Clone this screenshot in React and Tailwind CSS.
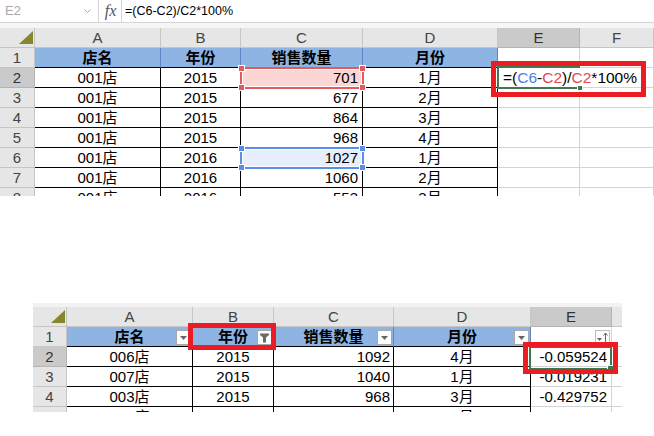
import React from 'react'

const F = "font-['Liberation_Sans','Noto_Sans_CJK_SC',sans-serif]"

const hdr = 'shrink-0 h-[20px] flex items-center justify-center bg-[#e6e6e6] border-r border-b border-[#c6c6c6] text-[#444]'
const hdrSel = 'shrink-0 h-[20px] flex items-center justify-center bg-[#cacaca] border-r border-b border-[#b4b4b4] text-[#333]'
const data = 'shrink-0 h-[20px] flex items-center border-r border-b border-black whitespace-nowrap overflow-hidden'
const thead = 'relative shrink-0 h-[20px] flex items-center justify-center bg-[#8db4e2] border-r border-b border-[#5b87c6] border-b-black font-bold whitespace-nowrap'
const grid = 'shrink-0 h-[20px] flex items-center border-r border-b border-[#d4d4d4] whitespace-nowrap'

const topRows = [
  ['001店', '2015', '701', '1月'],
  ['001店', '2015', '677', '2月'],
  ['001店', '2015', '864', '3月'],
  ['001店', '2015', '968', '4月'],
  ['001店', '2016', '1027', '1月'],
  ['001店', '2016', '1060', '2月'],
  ['001店', '2016', '553', '3月'],
]

const bottomRows = [
  ['006店', '2015', '1092', '4月', '-0.059524'],
  ['007店', '2015', '1040', '1月', '-0.019231'],
  ['003店', '2015', '968', '3月', '-0.429752'],
  ['005店', '2016', '1210', '2月', '0.112403'],
]

const Corner = ({ w }) => (
  <div className={`${hdr} ${w} relative`}>
    <svg className="absolute right-[1px] bottom-[3px]" width="14" height="13" viewBox="0 0 14 13">
      <polygon points="14,0 14,13 0,13" fill="#86862f" />
    </svg>
  </div>
)

const DropBtn = () => (
  <span className="absolute right-[1px] top-[3px] w-[15px] h-[15px] bg-[#fdfdfd] border border-[#a8a8a8] flex items-center justify-center">
    <svg width="9" height="9" viewBox="0 0 9 9">
      <polygon points="1,3 8,3 4.5,7" fill="#666" />
    </svg>
  </span>
)

const FilterBtn = () => (
  <span className="absolute right-[1px] top-[3px] w-[15px] h-[15px] bg-[#fdfdfd] border border-[#a8a8a8] flex items-center justify-center">
    <svg width="11" height="11" viewBox="0 0 11 11">
      <path d="M1 1.5h9v1.5l-3 2.5v5h-3v-5l-3-2.5z" fill="#6a6a6a" />
    </svg>
  </span>
)

const SortBtn = () => (
  <span className="absolute right-[1px] top-[3px] w-[15px] h-[15px] bg-[#fdfdfd] border border-[#bdbdbd] flex items-center justify-center">
    <svg width="13" height="13" viewBox="0 0 13 13">
      <polygon points="1,7 6,7 3.5,10" fill="#666" />
      <path d="M9.5 12V2M7.5 4.5l2-2.5 2 2.5" stroke="#666" strokeWidth="1" fill="none" />
    </svg>
  </span>
)

const Outline = ({ pos, color, fill }) => (
  <div className={`absolute ${pos} border-2 ${color} ${fill} shadow-[inset_0_0_0_1px_white]`}>
    <span className={`absolute -left-[4px] -top-[4px] w-[7px] h-[7px] border border-white ${fill === 'bg-transparent' ? '' : ''} ${color.replace('border-', 'bg-')}`} />
  </div>
)

const Handles = ({ bg }) => (
  <>
    <span className={`absolute -left-[4px] -top-[4px] w-[7px] h-[7px] border border-white ${bg}`} />
    <span className={`absolute -right-[4px] -top-[4px] w-[7px] h-[7px] border border-white ${bg}`} />
    <span className={`absolute -left-[4px] -bottom-[4px] w-[7px] h-[7px] border border-white ${bg}`} />
    <span className={`absolute -right-[4px] -bottom-[4px] w-[7px] h-[7px] border border-white ${bg}`} />
  </>
)

function TopSheet() {
  return (
    <div className="relative h-[196px] overflow-hidden shrink-0">
      {/* formula bar */}
      <div className="flex h-[23px] border-b border-[#d4d4d4]">
        <div className="w-[99px] flex items-center justify-between pl-[5px] pr-[7px] border-r border-[#d4d4d4]">
          <span className="text-[13px] text-[#a8a8a8]">E2</span>
          <svg width="7" height="5" viewBox="0 0 7 5">
            <path d="M0.5 0.5l3 3 3-3" stroke="#aaa" fill="none" />
          </svg>
        </div>
        <div className="w-[22px] ml-[1px] flex items-center justify-center border-r border-[#d4d4d4]">
          <span className="font-['Liberation_Serif',serif] italic text-[16px] text-[#555]">fx</span>
        </div>
        <div className="pl-[3px] flex items-center text-[12.5px]">=(C6-C2)/C2*100%</div>
      </div>
      <div className="h-[5px] bg-[#f6f6f6]" />

      {/* column headers */}
      <div className="flex">
        <Corner w="w-[35px]" />
        <div className={`${hdr} w-[126px]`}>A</div>
        <div className={`${hdr} w-[80px]`}>B</div>
        <div className={`${hdr} w-[122px]`}>C</div>
        <div className={`${hdr} w-[135px]`}>D</div>
        <div className={`${hdrSel} w-[82px]`}>E</div>
        <div className={`${hdr} w-[74px]`}>F</div>
      </div>

      {/* row 1 */}
      <div className="flex">
        <div className={`${hdr} w-[35px]`}>1</div>
        <div className={`${thead} w-[126px]`}>店名</div>
        <div className={`${thead} w-[80px]`}>年份</div>
        <div className={`${thead} w-[122px]`}>销售数量</div>
        <div className={`${thead} w-[135px]`}>月份</div>
        <div className={`${grid} w-[82px]`} />
        <div className={`${grid} w-[74px]`} />
      </div>

      {topRows.map((r, i) => (
        <div key={i} className="flex">
          <div className={`${i === 0 ? hdrSel : hdr} w-[35px]`}>{i + 2}</div>
          <div className={`${data} w-[126px] justify-center`}>{r[0]}</div>
          <div className={`${data} w-[80px] justify-center`}>{r[1]}</div>
          <div className={`${data} w-[122px] justify-end pr-[4px] ${i === 0 ? 'bg-[#fcd5d5]' : i === 4 ? 'bg-[#e6eefc]' : ''}`}>{r[2]}</div>
          <div className={`${data} w-[135px] justify-center`}>{r[3]}</div>
          {i === 0 ? (
            <div className="shrink-0 h-[20px] w-[82px] flex items-center border-b border-[#d4d4d4] pl-[5px] whitespace-nowrap text-[15.5px]">
              =(<span className="text-[#4a7fe3]">C6</span>-<span className="text-[#e5484c]">C2</span>)/<span className="text-[#e5484c]">C2</span>*100%
            </div>
          ) : (
            <div className={`${grid} w-[82px]`} />
          )}
          <div className={`${grid} w-[74px]`} />
        </div>
      ))}

      {/* overlays */}
      <div className="absolute left-[240px] top-[67px] w-[124px] h-[22px] border-2 border-[#e45b5d] shadow-[inset_0_0_0_1px_white]">
        <Handles bg="bg-[#e45b5d]" />
      </div>
      <div className="absolute left-[240px] top-[147px] w-[124px] h-[22px] border-2 border-[#5b8ee6] shadow-[inset_0_0_0_1px_white]">
        <Handles bg="bg-[#5b8ee6]" />
      </div>
      <div className="absolute left-[497px] top-[66px] w-[83px] h-[23px] border-l-2 border-t-2 border-b-2 border-[#41794f]">
        <span className="absolute -right-[3px] -bottom-[4px] w-[6px] h-[6px] bg-[#41794f] border border-white" />
      </div>
      <div className="absolute left-[491px] top-[61px] w-[155px] h-[36px] border-[5px] border-[#ec1c24]" />
    </div>
  )
}

function BottomSheet() {
  return (
    <div className="relative ml-[33px] w-[589px] h-[109px] overflow-hidden shrink-0">
      <div className="h-[4px] bg-[#f2f2f2]" />
      <div className="flex">
        <Corner w="w-[34px]" />
        <div className={`${hdr} w-[126px]`}>A</div>
        <div className={`${hdr} w-[81px]`}>B</div>
        <div className={`${hdr} w-[120px]`}>C</div>
        <div className={`${hdr} w-[137px]`}>D</div>
        <div className={`${hdrSel} w-[81px]`}>E</div>
        <div className={`${hdr} w-[10px] border-r-0`} />
      </div>

      <div className="flex">
        <div className={`${hdr} w-[34px]`}>1</div>
        <div className={`${thead} w-[126px]`}>店名<DropBtn /></div>
        <div className={`${thead} w-[81px]`}>年份<FilterBtn /></div>
        <div className={`${thead} w-[120px]`}>销售数量<DropBtn /></div>
        <div className={`${thead} w-[137px]`}>月份<DropBtn /></div>
        <div className={`${grid} w-[81px] relative`}><SortBtn /></div>
        <div className="shrink-0 h-[20px] w-[10px] border-b border-[#d4d4d4]" />
      </div>

      {bottomRows.map((r, i) => (
        <div key={i} className="flex">
          <div className={`${i === 0 ? hdrSel : hdr} w-[34px] text-[#1b8a47]`}>{i + 2}</div>
          <div className={`${data} w-[126px] justify-center`}>{r[0]}</div>
          <div className={`${data} w-[81px] justify-center`}>{r[1]}</div>
          <div className={`${data} w-[120px] justify-end pr-[3px]`}>{r[2]}</div>
          <div className={`${data} w-[137px] justify-center`}>{r[3]}</div>
          <div className={`${grid} w-[81px] justify-end pr-[4px]`}>{r[4]}</div>
          <div className="shrink-0 h-[20px] w-[10px] border-b border-[#d4d4d4]" />
        </div>
      ))}

      <div className="absolute left-[496px] top-[43px] w-[83px] h-[24px] border-2 border-[#41794f]">
        <span className="absolute -right-[4px] -bottom-[4px] w-[7px] h-[7px] bg-[#41794f] border border-white" />
      </div>
      <div className="absolute left-[155px] top-[20px] w-[88px] h-[27px] border-[5px] border-[#ec1c24]" />
      <div className="absolute left-[490px] top-[39px] w-[95px] h-[32px] border-[5px] border-[#ec1c24]" />
    </div>
  )
}

export default function App() {
  return (
    <div className={`w-[654px] h-[436px] bg-white overflow-hidden flex flex-col text-[15px] leading-[20px] text-black ${F}`}>
      <TopSheet />
      <div className="h-[107px] shrink-0" />
      <BottomSheet />
    </div>
  )
}
